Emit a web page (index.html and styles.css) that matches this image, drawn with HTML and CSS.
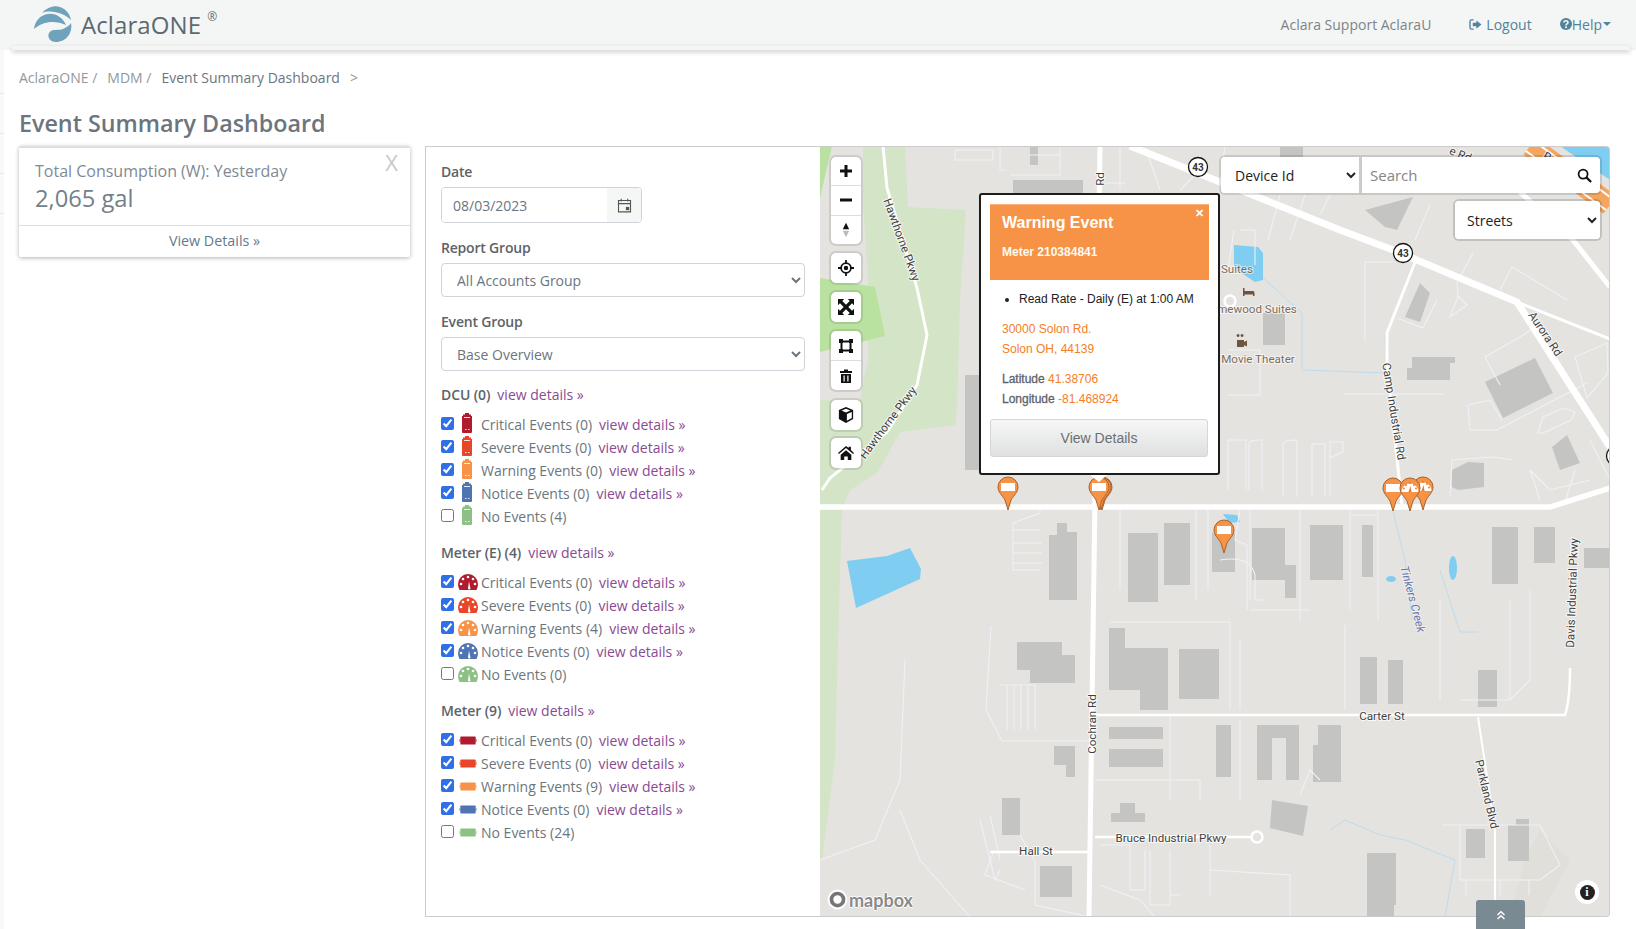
FILE: index.html
```html
<!DOCTYPE html>
<html lang="en">
<head>
<meta charset="utf-8">
<title>Event Summary Dashboard</title>
<link rel="stylesheet" href="styles.css">
</head>
<body>
<svg class="defs" aria-hidden="true">
  <symbol id="dcu" viewBox="0 0 14 20"><path fill="currentColor" d="M3 3V1.500h2V0h4v1.500h2V3h1v16a1 1 0 0 1-1 1H3a1 1 0 0 1-1-1V3z"/><path fill="#fff" d="M4 4h6v1H4zM5 16h1.500v1H5zM8 16h1.500v1H8z" opacity=".85"/></symbol>
  <symbol id="gauge" viewBox="0 0 20 16"><path fill="currentColor" d="M10 0a10 10 0 0 1 10 10c0 2-.5 4-1.500 6H1.500C.5 14 0 12 0 10A10 10 0 0 1 10 0z"/><g fill="#fff"><circle cx="10" cy="3" r="1.300"/><circle cx="5" cy="5" r="1.300"/><circle cx="15" cy="5" r="1.300"/><circle cx="3" cy="10" r="1.300"/><circle cx="17" cy="10" r="1.300"/><path d="M10 14.500l1-7 1.500 7.500a1.500 1.500 0 0 1-2.500-.5z"/></g></symbol>
  <symbol id="mtr" viewBox="0 0 20 10"><path fill="currentColor" opacity=".45" d="M0 3.500h20v3H0z"/><rect fill="currentColor" x="1.500" y="0.500" width="17" height="9" rx="1"/></symbol>
</svg>

<header class="topbar">
  <div class="brand">
    <svg class="logo" viewBox="33 5 40 40"><path fill="#6fa3bb" d="M42 14C47 8 55 6 60 8C66 10 70 15 71 21C65 15 52 10 42 14z"/><path fill="#6fa3bb" d="M34 30C35 22 40 16 48 15C56 14 63 19 66 26C55 21 43 22 34 30z"/><path fill="#6fa3bb" d="M71 24c2 10-5 19-15 19-6 0-9-5-7-9 3-5 10-2 14-4 4-2 7-4 8-6z"/></svg>
    <span class="brand-name">AclaraONE</span><sup class="brand-reg">®</sup>
  </div>
  <nav class="topnav">
    <span class="user">Aclara Support AclaraU</span>
    <a class="navlink logout"><svg class="navicon" viewBox="0 0 14 12"><path fill="none" stroke="currentColor" stroke-width="1.500" d="M5 1H2.500A1.500 1.500 0 0 0 1 2.500v7A1.500 1.500 0 0 0 2.500 11H5"/><path fill="currentColor" d="M8 1.500L13.500 6 8 10.500V8H4V4h4z"/></svg>Logout</a>
    <a class="navlink help"><svg class="navicon-q" viewBox="0 0 12 12"><circle cx="6" cy="6" r="6" fill="currentColor"/><path fill="none" stroke="#f4f6f6" stroke-width="1.600" d="M4 4.500C4 3.300 5 2.700 6 2.700s2 .6 2 1.800c0 1.400-2 1.400-2 3"/><circle cx="6" cy="9.300" r="1" fill="#f4f6f6"/></svg>Help<span class="caret"></span></a>
  </nav>
</header>

<div class="shell">
  <div class="rail"><i></i><i></i><i></i><i></i></div>
  <main class="content">
    <ol class="crumbs">
      <li>AclaraONE /</li>
      <li>MDM /</li>
      <li class="crumb-current">Event Summary Dashboard</li>
      <li class="crumb-sep">&gt;</li>
    </ol>
    <h1 class="page-title">Event Summary Dashboard</h1>

    <div class="columns">
      <aside class="side">
        <section class="stat-card">
          <div class="stat-body">
            <span class="stat-close">X</span>
            <div class="stat-label">Total Consumption (W): Yesterday</div>
            <div class="stat-value">2,065 gal</div>
          </div>
          <a class="stat-foot">View Details »</a>
        </section>
      </aside>

      <form class="panel">
        <label class="field-label">Date</label>
        <div class="date-group">
          <input class="date-input" type="text" value="08/03/2023">
          <span class="date-addon"><svg class="cal" viewBox="0 0 16 16"><path fill="none" stroke="#555" stroke-width="1.200" d="M1.600 2.600h12.800v12.200H1.600zM1.600 6h12.800M4.500 .8v3M11.500 .8v3"/><rect x="9.500" y="9.500" width="3.500" height="3.500" fill="#555"/></svg></span>
        </div>
        <label class="field-label">Report Group</label>
        <select class="field-select"><option>All Accounts Group</option></select>
        <label class="field-label">Event Group</label>
        <select class="field-select"><option>Base Overview</option></select>

        <div class="group-head"><b>DCU (0)</b><a class="vd">view details »</a></div>
        <ul class="checks">
          <li><input type="checkbox" checked><span class="ico-slot"><svg class="ico-dcu c-critical"><use href="#dcu"/></svg></span>Critical Events (0)<a class="vd">view details »</a></li>
          <li><input type="checkbox" checked><span class="ico-slot"><svg class="ico-dcu c-severe"><use href="#dcu"/></svg></span>Severe Events (0)<a class="vd">view details »</a></li>
          <li><input type="checkbox" checked><span class="ico-slot"><svg class="ico-dcu c-warning"><use href="#dcu"/></svg></span>Warning Events (0)<a class="vd">view details »</a></li>
          <li><input type="checkbox" checked><span class="ico-slot"><svg class="ico-dcu c-notice"><use href="#dcu"/></svg></span>Notice Events (0)<a class="vd">view details »</a></li>
          <li><input type="checkbox"><span class="ico-slot"><svg class="ico-dcu c-none"><use href="#dcu"/></svg></span>No Events (4)</li>
        </ul>

        <div class="group-head"><b>Meter (E) (4)</b><a class="vd">view details »</a></div>
        <ul class="checks">
          <li><input type="checkbox" checked><span class="ico-slot"><svg class="ico-gauge c-critical"><use href="#gauge"/></svg></span>Critical Events (0)<a class="vd">view details »</a></li>
          <li><input type="checkbox" checked><span class="ico-slot"><svg class="ico-gauge c-severe"><use href="#gauge"/></svg></span>Severe Events (0)<a class="vd">view details »</a></li>
          <li><input type="checkbox" checked><span class="ico-slot"><svg class="ico-gauge c-warning"><use href="#gauge"/></svg></span>Warning Events (4)<a class="vd">view details »</a></li>
          <li><input type="checkbox" checked><span class="ico-slot"><svg class="ico-gauge c-notice"><use href="#gauge"/></svg></span>Notice Events (0)<a class="vd">view details »</a></li>
          <li><input type="checkbox"><span class="ico-slot"><svg class="ico-gauge c-none"><use href="#gauge"/></svg></span>No Events (0)</li>
        </ul>

        <div class="group-head"><b>Meter (9)</b><a class="vd">view details »</a></div>
        <ul class="checks">
          <li><input type="checkbox" checked><span class="ico-slot"><svg class="ico-mtr c-critical"><use href="#mtr"/></svg></span>Critical Events (0)<a class="vd">view details »</a></li>
          <li><input type="checkbox" checked><span class="ico-slot"><svg class="ico-mtr c-severe"><use href="#mtr"/></svg></span>Severe Events (0)<a class="vd">view details »</a></li>
          <li><input type="checkbox" checked><span class="ico-slot"><svg class="ico-mtr c-warning"><use href="#mtr"/></svg></span>Warning Events (9)<a class="vd">view details »</a></li>
          <li><input type="checkbox" checked><span class="ico-slot"><svg class="ico-mtr c-notice"><use href="#mtr"/></svg></span>Notice Events (0)<a class="vd">view details »</a></li>
          <li><input type="checkbox"><span class="ico-slot"><svg class="ico-mtr c-none"><use href="#mtr"/></svg></span>No Events (24)</li>
        </ul>
      </form>

      <section class="map">
        <svg class="map-canvas" viewBox="820 147 790 771" preserveAspectRatio="none">
          <defs>
            <g id="pin-head"><path fill="#f79346" stroke="#a9622c" stroke-width="1" d="M0 0L-3 -10C-6 -15 -10 -18 -10 -23A10 10 0 0 1 10 -23C10 -18 6 -15 3 -10z"/></g>
            <g id="pin-rect"><use href="#pin-head"/><rect x="-7" y="-27" width="14" height="8" fill="#fff"/></g>
            <g id="pin-gauge"><use href="#pin-head"/><path fill="#fff" d="M-8.500 -19A8.500 8.500 0 1 1 8.500 -19z"/><g fill="#e8782a"><circle cx="0" cy="-28" r=".9"/><circle cx="-4" cy="-26" r=".9"/><circle cx="4" cy="-26" r=".9"/><circle cx="-6" cy="-22.500" r=".9"/><circle cx="6" cy="-22.500" r=".9"/><path d="M-1.500 -19L.5 -25L1.500 -19z"/></g></g>
          </defs>

          <!-- land cover -->
          <path class="park" d="M863 146H905L908 207L966 210L960 300L957 410L955 425L900 432L878 472L850 490L843 506H820V400H860L868 360L868 280L863 200z"/>
          <path class="park" d="M820 510H842L838 640L835 760L822 860H820z"/>
          <path class="park-dark" d="M820 146H832L820 198zM820 278L875 287L885 336L820 352z"/>
          <path class="shade" d="M1540 830L1570 860L1540 917H1510L1525 860z"/>

          <!-- water -->
          <path class="water" d="M847 561L887 556L910 548L921 569L920 579L856 608z"/>
          <path class="water" d="M1234 245L1258 247L1263 253V280L1255 282L1234 268z"/>
          <path class="water" d="M1223 514L1237 515L1240 522L1229 523z"/>
          <ellipse class="water" cx="1453" cy="568" rx="4" ry="12"/>
          <ellipse class="water" cx="1391" cy="579" rx="5" ry="3"/>
          <path class="water" d="M1560 146H1610V180z"/>

          <!-- buildings -->
          <g class="bldg">
            <rect x="965" y="375" width="15" height="95"/><rect x="1013" y="180" width="70" height="14"/><rect x="1030" y="147" width="8" height="18"/><rect x="1280" y="146" width="23" height="11"/>
            <path d="M1049 535H1057V523H1067V532H1077V600H1049z"/>
            <rect x="1128" y="533" width="30" height="69"/><rect x="1164" y="523" width="26" height="62"/><rect x="1212" y="533" width="23" height="39"/>
            <path d="M1252 528H1285V565H1296V598H1285V580H1252z"/>
            <rect x="1310" y="525" width="33" height="55"/><rect x="1362" y="525" width="11" height="52"/><rect x="1492" y="527" width="26" height="57"/><rect x="1534" y="527" width="21" height="36"/><rect x="1584" y="548" width="26" height="20"/>
            <path d="M1420 283L1430 293L1420 322L1405 317zM1412 357H1455V363H1450V380H1407V368H1412zM1485 382L1535 358L1553 393L1503 418zM1552 447L1567 435L1580 463L1560 470zM1452 470L1468 462L1484 463V487L1458 490L1452 487zM1365 210L1413 197L1397 230L1385 227z"/>
            <rect x="1263" y="313" width="22" height="32"/>
            <path d="M1017 642H1062V655H1075V683H1030V670H1017zM1109 628H1125V648H1168V710H1140V690H1109z"/>
            <rect x="1179" y="649" width="40" height="50"/><rect x="1360" y="657" width="17" height="47"/><rect x="1388" y="660" width="15" height="44"/><rect x="1478" y="670" width="19" height="37"/>
            <rect x="1109" y="727" width="54" height="12"/><rect x="1109" y="749" width="54" height="18"/><path d="M1054 746H1075V777H1066V765H1054z"/><rect x="1216" y="725" width="15" height="52"/>
            <path d="M1257 725H1299V780H1286V738H1272V780H1257z"/><path d="M1318 725H1341V782H1313V745H1318z"/>
            <path d="M1002 798H1020V835H1002z"/><path d="M1111 813H1120V803H1135V813H1145V822H1111z"/><path d="M1272 800L1308 806L1303 836L1270 828z"/>
            <rect x="1040" y="866" width="32" height="31"/><path d="M1367 853H1396V905H1394V916H1367z"/><rect x="1466" y="829" width="19" height="29"/><path d="M1508 825H1516V819H1529V861H1508z"/>
          </g>

          <!-- service roads -->
          <g class="lane">
            <path d="M955 150H993V160H955zM1000 146V170H1005M1010 175H1060V146M1030 155H1060M1120 146V190M1105 183H1125M1180 190L1195 175M1145 146L1160 190"/>
            <path d="M1225 146L1219 190M1280 195L1268 240M1305 195L1290 240M1330 195L1320 215M1430 205L1415 240M1240 230H1255V265M1228 270L1234 230"/>
            <path d="M1365 342V262H1393M1473 253L1457 283L1458 297L1450 317L1467 305L1457 295M1437 300L1423 328L1397 318M1512 267L1567 300M1512 267L1500 290M1485 357L1520 337L1535 327M1485 357L1500 385M1468 405L1470 430L1497 430L1587 383M1468 405L1490 400L1502 420M1575 357L1607 343L1608 373L1587 398z"/>
            <path d="M1538 433L1543 417L1563 408L1575 412L1571 420L1543 433zM1450 497L1452 460L1493 457L1513 460M1344 394H1443M1227 350H1260V395H1227M1228 490V440H1246V490M1249 490V444Q1250 440 1258 440H1262V490M1283 497V443Q1285 440 1297 440V497M1312 497V444H1325V497M1330 497V442H1343V452L1330 458"/>
            <path d="M1540 500L1530 470L1550 490L1590 480M1590 440L1610 480M1565 502L1575 470"/>
            <path d="M1040 508V513L1013 523V570H1040M1013 530H1040M1013 543H1042M1013 553H1042M1013 563H1042M991 626L986 710L1002 741H1090M1000 685H1035V730M1007 685V730M1014 685V730M1021 685V730M1028 685V730"/>
            <path d="M1120 508V590M1196 510V600M1206 510H1208V590M1240 510L1235 540L1247 545V610M1250 510V600M1300 510V620M1350 510V610M1378 510V620M1350 515H1378M1310 610H1250"/>
            <path d="M1110 622H1230V710M1240 640V710M1345 625V710M1440 600V700M1510 600V700H1460M1530 590V680L1510 700M1220 560Q1250 555 1255 575V600H1265"/>
            <path d="M1095 780H1200V800M1170 715V800M1240 720V800M1300 795L1310 770L1320 780M1100 845H1130V890H1145V850M1150 850V905H1170V850M1210 845V895M1170 895H1180M1100 885L1140 900L1155 917M1210 870L1290 875V917M1150 917H1220"/>
            <path d="M980 820L995 880L1000 870M990 815L1000 860M994 850L985 875L1025 890M1020 835L1035 862V905L1090 917M820 860L875 840L900 780L905 660M900 810L920 860L970 917"/>
            <path d="M1442 825H1540L1560 865L1540 880H1460V825zM1466 880V895M1500 880V895M1529 880V895"/>
          </g>
          <g class="creek">
            <path d="M1413 263L1385 337L1387 373L1302 370V313L1263 278M1393 511L1405 560L1412 620M1440 570L1460 632H1478M1330 830L1345 820L1380 835L1405 840L1455 860L1445 917"/>
          </g>

          <!-- streets -->
          <g class="road">
            <path d="M883 146L887 188L917 288L927 335L917 385L887 432L830 478L822 490" stroke-width="3"/>
            <path d="M1095 715H1565Q1570 700 1570 668" stroke-width="2.500"/>
            <path d="M1095 837H1257M990 852H1092" stroke-width="2.500"/>
            <path d="M1415 262L1387 333V363L1402 506" stroke-width="3"/>
            <path d="M1478 717L1495 830V917" stroke-width="2"/>
            <path d="M1520 192L1573 240L1610 287" stroke-width="5"/>
            <path d="M1517 302L1610 339" stroke-width="3"/>
            <path d="M1130 146L1340 230L1393 250L1517 302L1610 447" stroke-width="7"/>
            <path d="M1100 146L1089 917" stroke-width="5"/>
            <path d="M820 507H1550L1610 488" stroke-width="5.500"/>
            <path d="M1530 146L1610 205" class="motor" stroke-width="22"/>
            <path d="M1526 151L1606 210M1534 141L1614 200" stroke-width="2"/>
          </g>

          <!-- ring junctions and shields -->
          <circle class="ring" cx="1257" cy="837" r="5.500"/>
          <circle class="ring" cx="1230" cy="301" r="5.500"/>
          <circle class="shield" cx="1198" cy="167" r="9.500"/><text class="shield-t" x="1198" y="171">43</text>
          <circle class="shield" cx="1403" cy="253" r="9.500"/><text class="shield-t" x="1403" y="257">43</text>
          <circle class="shield" cx="1616" cy="456" r="9.500"/>

          <!-- labels -->
          <text class="lbl" transform="translate(898 241) rotate(70)">Hawthorne Pkwy</text>
          <text class="lbl" transform="translate(891 425) rotate(-53)">Hawthorne Pkwy</text>
          <text class="lbl" transform="translate(1104 179) rotate(-90)">Rd</text>
          <text class="lbl" transform="translate(1096 724) rotate(-90)">Cochran Rd</text>
          <text class="lbl" transform="translate(1390 412) rotate(81)">Camp Industrial Rd</text>
          <text class="lbl" transform="translate(1542 336) rotate(56)">Aurora Rd</text>
          <text class="lbl lbl-water" transform="translate(1409 600) rotate(75)">Tinkers Creek</text>
          <text class="lbl" transform="translate(1576 593) rotate(-88)">Davis Industrial Pkwy</text>
          <text class="lbl" x="1382" y="720">Carter St</text>
          <text class="lbl" transform="translate(1483 795) rotate(77)">Parkland Blvd</text>
          <text class="lbl" x="1171" y="842">Bruce Industrial Pkwy</text>
          <text class="lbl" x="1036" y="855">Hall St</text>
          <text class="lbl" transform="translate(1459 158) rotate(22)">e Rd</text>
          <text class="lbl" transform="translate(1545 160) rotate(30)">R</text>
          <text class="poi" x="1237" y="273">Suites</text>
          <text class="poi" x="1257" y="313">mewood Suites</text>
          <text class="poi" x="1258" y="363">Movie Theater</text>
          <path class="poi-ico" d="M1243 288h1.500v3h8.500q1.500 0 1.500 2v3h-1.500v-1.500h-8.500V296h-1.500z"/>
          <path class="poi-ico" d="M1237 340h7v2l3-1.500v6l-3-1.500v2h-7zM1238 337a1.500 1.500 0 1 1 .1 0zM1242 337a1.500 1.500 0 1 1 .1 0z"/>

          <!-- markers -->
          <use href="#pin-rect" transform="translate(1008 510)"/>
          <use href="#pin-rect" transform="translate(1102 510)"/>
          <use href="#pin-rect" transform="translate(1101 510)"/>
          <use href="#pin-rect" transform="translate(1099 510)"/>
          <use href="#pin-rect" transform="translate(1224 553)"/>
          <use href="#pin-gauge" transform="translate(1423 510)"/>
          <use href="#pin-rect" transform="translate(1393 511)"/>
          <use href="#pin-gauge" transform="translate(1410 511)"/>
          <path d="M1089 474H1108L1099 482z" fill="#fff"/>
        </svg>

        <div class="mapctl ctl-zoom">
          <button class="mapbtn" type="button"><svg class="mi" viewBox="0 0 16 16"><path d="M6.500 2h3v4.500H14v3H9.500V14h-3V9.500H2v-3h4.500z"/></svg></button>
          <button class="mapbtn" type="button"><svg class="mi" viewBox="0 0 16 16"><path d="M2 6.500h12v3H2z"/></svg></button>
          <button class="mapbtn" type="button"><svg class="mi" viewBox="0 0 16 20"><path d="M8 1l4 8H4z"/><path d="M8 19l-4-8h8z" fill="#bbb"/></svg></button>
        </div>
        <div class="mapctl ctl-locate">
          <button class="mapbtn" type="button"><svg class="mi" viewBox="0 0 18 18"><circle cx="9" cy="9" r="5.500" fill="none" stroke="#111" stroke-width="2"/><circle cx="9" cy="9" r="2.500"/><path d="M8 0h2v4H8zM8 14h2v4H8zM0 8h4v2H0zM14 8h4v2h-4z"/></svg></button>
        </div>
        <div class="mapctl ctl-full">
          <button class="mapbtn" type="button"><svg class="mi" viewBox="0 0 18 18"><path d="M0 0h7L4.800 2.200 9 6.400 13.200 2.200 11 0h7v7l-2.200-2.200L11.600 9l4.200 4.200L18 11v7h-7l2.200-2.200L9 11.600l-4.200 4.200L7 18H0v-7l2.200 2.200L6.400 9 2.200 4.800 0 7z"/></svg></button>
        </div>
        <div class="mapctl ctl-draw">
          <button class="mapbtn" type="button"><svg class="mi" viewBox="0 0 16 16"><path d="M1 1h4v1.500h6V1h4v4h-1.500v6H15v4h-4v-1.500H5V15H1v-4h1.500V5H1zM4.500 5v6H5v.5h6V11h.5V5H11v-.5H5V5z"/></svg></button>
          <button class="mapbtn" type="button"><svg class="mi" viewBox="0 0 16 16"><path d="M2 3h4V1.500h4V3h4v2H2zM3 6h10v9H3zM5.500 7.500v6h1.200v-6zM9.300 7.500v6h1.200v-6z" fill-rule="evenodd"/></svg></button>
        </div>
        <div class="mapctl ctl-cube">
          <button class="mapbtn" type="button"><svg class="mi" viewBox="0 0 18 18"><path d="M9 0l8 3.500v10L9 18l-8-4.500v-10zM9 2L4 4l5 2.200L14 4zM10 8v7.500l5.500-3V5.600z" fill-rule="evenodd"/></svg></button>
        </div>
        <div class="mapctl ctl-home">
          <button class="mapbtn" type="button"><svg class="mi" viewBox="0 0 18 16"><path d="M9 0l3 2.500V1h2.500v3.700L18 8l-1 1.200L9 2.500 1 9.200 0 8zM3 10l6-5 6 5v6h-4v-4H7v4H3z"/></svg></button>
        </div>

        <div class="searchbar">
          <select class="search-type"><option>Device Id</option></select>
          <div class="search-box">
            <input class="search-input" type="text" placeholder="Search">
            <svg class="search-ico" viewBox="0 0 16 16"><circle cx="6.500" cy="6.500" r="4.800" fill="none" stroke="#111" stroke-width="1.900"/><path d="M10 10l5 5" stroke="#111" stroke-width="2.400"/></svg>
          </div>
        </div>
        <div class="styleswitch"><select class="style-select"><option>Streets</option></select></div>

        <div class="popup">
          <div class="popup-head">
            <span class="popup-x">✕</span>
            <div class="popup-title">Warning Event</div>
            <div class="popup-sub">Meter 210384841</div>
          </div>
          <ul class="popup-list"><li>Read Rate - Daily (E) at 1:00 AM</li></ul>
          <p class="popup-addr">30000 Solon Rd.<br>Solon OH, 44139</p>
          <p class="popup-geo"><b>Latitude</b> <span>41.38706</span><br><b>Longitude</b> <span>-81.468924</span></p>
          <button class="popup-btn" type="button">View Details</button>
        </div>

        <div class="mapbox-mark"><svg class="mapbox-ico" viewBox="0 0 20 20"><circle cx="10" cy="10" r="8.500" fill="#777" stroke="#fff" stroke-width="2"/><circle cx="10" cy="10" r="4" fill="#fff"/></svg><span class="mapbox-word">mapbox</span></div>
        <div class="map-info"><span class="map-info-i">i</span></div>
      </section>
    </div>
  </main>
</div>
<div class="scrolltab"><svg class="scrolltab-ico" viewBox="0 0 10 10"><path fill="none" stroke="#fff" stroke-width="1.400" d="M1.500 5L5 1.800 8.500 5M1.500 9L5 5.800 8.500 9"/></svg></div>
</body>
</html>
```

FILE: styles.css
```css
* { box-sizing: border-box; }
html, body { margin: 0; height: 929px; overflow: hidden; background: #fff; }
body { font-family: "Open Sans", sans-serif; font-size: 14px; color: #6c757d; position: relative; }
.defs { display: none; }

/* top bar */
.topbar { height: 50px; background: #f4f6f6; display: flex; justify-content: space-between; align-items: center; padding: 0 25px 2px 34px; position: relative; z-index: 2; }
.topbar::after { content: ""; position: absolute; left: 12px; right: 6px; bottom: 0; height: 4px; box-shadow: 0 2px 5px rgba(0,0,0,.22); z-index: -1; }
.brand { display: flex; align-items: center; }
.logo { width: 40px; height: 40px; margin-left: -1px; }
.brand-name { font-size: 24px; color: #5d6970; margin-left: 8px; letter-spacing: .1px; }
.brand-reg { font-size: 12px; color: #5d6970; margin: -16px 0 0 6px; }
.topnav { display: flex; align-items: center; }
.user { color: #7d8488; font-size: 14px; margin-right: 38px; }
.navlink { color: #52839c; display: inline-flex; align-items: center; }
.logout { margin-right: 28px; }
.navicon { width: 13px; height: 11px; margin-right: 4px; }
.navicon-q { width: 12px; height: 12px; }
.caret { width: 0; height: 0; border: 4px solid transparent; border-top: 4px solid #52839c; border-bottom: 0; margin-left: 1px; }

/* shell */
.shell { display: flex; height: 879px; }
.rail { width: 4px; background: #f8f9f9; padding-top: 43px; }
.rail i { display: block; height: 40px; border-top: 1px solid #e6e6e6; }
.content { flex: 1; padding: 0 26px 0 15px; min-width: 0; }
.crumbs { list-style: none; margin: 0; padding: 18px 0 0; display: flex; color: #92989c; font-size: 14px; line-height: 19px; height: 38px; }
.crumbs li { margin-right: 10px; }
.crumb-current { color: #6c757d; margin-right: 10px !important; }
.page-title { margin: 0; height: 58px; padding-top: 19px; font-size: 23.300px; line-height: 33px; font-weight: 600; color: #6c757d; }
.columns { display: flex; height: 771px; }

/* card */
.side { width: 391px; margin-right: 15px; }
.stat-card { background: #fff; border-top: 2px solid #dedede; border-radius: 2px; box-shadow: 0 1px 4px rgba(0,0,0,.3); height: 111px; }
.stat-body { height: 78px; padding: 11px 16px 0; position: relative; border-bottom: 1px solid #dedede; }
.stat-close { position: absolute; right: 12px; top: -1px; font-size: 22px; color: #c9c9c9; }
.stat-label { font-size: 16px; line-height: 24px; color: #7f8a93; }
.stat-value { font-size: 23.700px; line-height: 30px; color: #73808b; }
.stat-foot { display: block; text-align: center; line-height: 29px; font-size: 14.300px; color: #5f7b8c; }

/* form panel */
.panel { width: 395px; border: 1px solid #ccc; border-right: 0; padding: 15px 15px 0; }
.field-label { display: block; color: #5c6369; font-weight: 600; font-size: 14px; line-height: 19px; margin-bottom: 6px; letter-spacing: -.2px; }
.date-group { display: flex; width: 201px; height: 36px; border: 1px solid #ced4da; border-radius: 4px; margin-bottom: 15px; overflow: hidden; }
.date-input { flex: 1; min-width: 0; border: 0; padding: 0 11px; font: 14px "Open Sans", sans-serif; color: #6c757d; outline: 0; }
.date-addon { width: 34px; background: #f5f6f6; display: flex; align-items: center; justify-content: center; }
.cal { width: 15px; height: 15px; }
.field-select { display: block; width: 364px; height: 34px; border: 1px solid #ced4da; border-radius: 4px; background: #fff; padding: 0 11px; font: 14px "Open Sans", sans-serif; color: #6c757d; margin-bottom: 15px; }
.group-head { color: #5c6369; line-height: 19px; margin-top: 15px; margin-bottom: 9px; }
.group-head b { font-weight: 600; letter-spacing: -.1px; }
.field-select + .group-head { margin-top: -1px; }
.vd { color: #8a4a92; margin-left: 7px; }
.group-head .vd { margin-left: 7px; }
.checks { list-style: none; margin: 0 0 12px; padding: 0; }
.checks li { display: flex; align-items: center; height: 23px; color: #6c757d; white-space: nowrap; }
.checks input { width: 13px; height: 13px; margin: -3px 0 0; accent-color: #2f6fe8; flex: none; }
.ico-slot { width: 27px; flex: none; display: flex; justify-content: center; }
.ico-dcu { width: 14px; height: 20px; margin-top: -3px; margin-left: -1px; }
.ico-gauge { width: 20px; height: 16px; margin-top: -2px; }
.ico-mtr { width: 18px; height: 9px; margin-top: 0; }
.c-critical { color: #b01c2e; }
.c-severe { color: #e8462a; }
.c-warning { color: #f79346; }
.c-notice { color: #4f74b3; }
.c-none { color: #8cc084; }

/* map */
.map { flex: 1; position: relative; overflow: hidden; background: #e4e3df; border: 1px solid #ccc; border-left: 0; border-radius: 0 4px 4px 0; }
.map-canvas { position: absolute; left: 0; top: 0; width: 790px; height: 771px; }
.park { fill: #d3e5c6; }
.park-dark { fill: #b9e2a0; }
.shade { fill: #e0dfda; }
.water { fill: #7fcdf1; }
.bldg { fill: #c4c4c2; }
.lane { fill: none; stroke: #eff1f7; stroke-width: 1.100; }
.creek { fill: none; stroke: #bcdcf0; stroke-width: 1; }
.road { fill: none; stroke: #fff; }
.road .motor { stroke: #f4a560; }
.ring { fill: #e4e3df; stroke: #fff; stroke-width: 2.500; }
.shield { fill: #fff; stroke: #111; stroke-width: 1.300; }
.shield-t { font: 700 10px "Roboto", sans-serif; fill: #333; text-anchor: middle; }
.lbl { font: 11.600px "Roboto", sans-serif; fill: #3f3f3f; text-anchor: middle; paint-order: stroke; stroke: #fff; stroke-width: 2px; stroke-opacity: .75; }
.lbl-water { fill: #6c74ad; font-style: italic; stroke-opacity: .4; }
.poi { font: 11.600px "Roboto", sans-serif; fill: #7d6b5d; text-anchor: middle; paint-order: stroke; stroke: #fff; stroke-width: 2px; stroke-opacity: .6; }
.poi-ico { fill: #6f5540; }

.mapctl { position: absolute; left: 11px; width: 30px; background: #fff; border-radius: 5px; box-shadow: 0 0 0 2px rgba(0,0,0,.1); display: flex; flex-direction: column; }
.ctl-zoom { top: 10px; height: 87px; }
.ctl-locate { top: 106px; height: 30px; }
.ctl-full { top: 145px; height: 30px; }
.ctl-draw { top: 184px; height: 59px; }
.ctl-cube { top: 253px; height: 30px; }
.ctl-home { top: 291px; height: 30px; }
.mapbtn { flex: 1; border: 0; background: none; padding: 0; display: flex; align-items: center; justify-content: center; }
.mapbtn + .mapbtn { border-top: 1px solid #ddd; }
.mi { width: 16px; height: 16px; fill: #111; }

.searchbar { position: absolute; left: 401px; top: 10px; width: 379px; height: 36px; display: flex; background: #fff; border-radius: 4px; box-shadow: 0 0 0 2px rgba(0,0,0,.12); }
.search-type { width: 141px; border: 0; border-right: 3px solid #ccc; background: #fff; padding-left: 10px; font: 14px "Open Sans", sans-serif; color: #222; border-radius: 4px 0 0 4px; }
.search-box { flex: 1; display: flex; align-items: center; padding-right: 8px; }
.search-input { flex: 1; min-width: 0; border: 0; background: none; font: 15px "Open Sans", sans-serif; padding: 0 8px; outline: 0; }
.search-input::placeholder { color: #858585; }
.search-ico { width: 15px; height: 15px; }
.styleswitch { position: absolute; left: 635px; top: 54px; width: 145px; height: 38px; background: #fff; border-radius: 4px; box-shadow: 0 0 0 2px rgba(0,0,0,.15); }
.style-select { width: 100%; height: 100%; border: 0; background: #fff; padding-left: 8px; font: 14px "Open Sans", sans-serif; color: #222; border-radius: 4px; }

/* popup */
.popup { position: absolute; left: 159px; top: 46px; width: 241px; height: 282px; background: #fff; border: 2px solid #1c1c1c; border-radius: 3px; padding: 9px 9px 0; font: 12px/20px "Liberation Sans", Arial, sans-serif; }
.popup-head { height: 76px; background: #f79346; color: #fff; padding: 7px 12px; position: relative; border-top: 1px solid #f8b27e; }
.popup-x { position: absolute; right: 5px; top: 0; font-size: 11px; font-weight: 700; line-height: 16px; }
.popup-title { font-size: 16px; font-weight: 700; line-height: 22px; }
.popup-sub { font-size: 12px; font-weight: 700; margin-top: 10px; line-height: 16px; opacity: .95; }
.popup-list { margin: 9px 0 0; padding: 0 0 0 29px; color: #222; line-height: 20px; }
.popup-addr { margin: 10px 0 0 12px; color: #f47e28; }
.popup-geo { margin: 10px 0 0 12px; color: #f47e28; }
.popup-geo b { color: #5c6369; font-weight: 400; -webkit-text-stroke: .3px #5c6369; }
.popup-btn { display: block; width: 218px; height: 38px; margin-top: 10px; border: 1px solid #d6d6d6; border-radius: 3px; background: linear-gradient(#f7f7f7, #dfe0e0); color: #6b6f72; font: 14px "Liberation Sans", Arial, sans-serif; }

/* attribution */
.mapbox-mark { position: absolute; left: 7px; bottom: 6px; display: flex; align-items: center; }
.mapbox-ico { width: 21px; height: 21px; }
.mapbox-word { font: 700 18px "Lato", sans-serif; color: #8a8a8a; margin-left: 1px; line-height: 20px; text-shadow: 1px 0 #fff, -1px 0 #fff, 0 1px #fff, 0 -1px #fff; }
.map-info { position: absolute; right: 10px; bottom: 12px; width: 24px; height: 24px; background: #fff; border-radius: 50%; display: flex; align-items: center; justify-content: center; }
.map-info-i { width: 15px; height: 15px; border-radius: 50%; background: #222; color: #fff; font: 700 12px/15px "Liberation Serif", serif; text-align: center; }
.scrolltab { position: absolute; left: 1476px; top: 900px; width: 49px; height: 29px; background: #7a8a93; border-radius: 3px 3px 0 0; display: flex; align-items: center; justify-content: center; z-index: 3; }
.scrolltab-ico { width: 10px; height: 10px; }
```
